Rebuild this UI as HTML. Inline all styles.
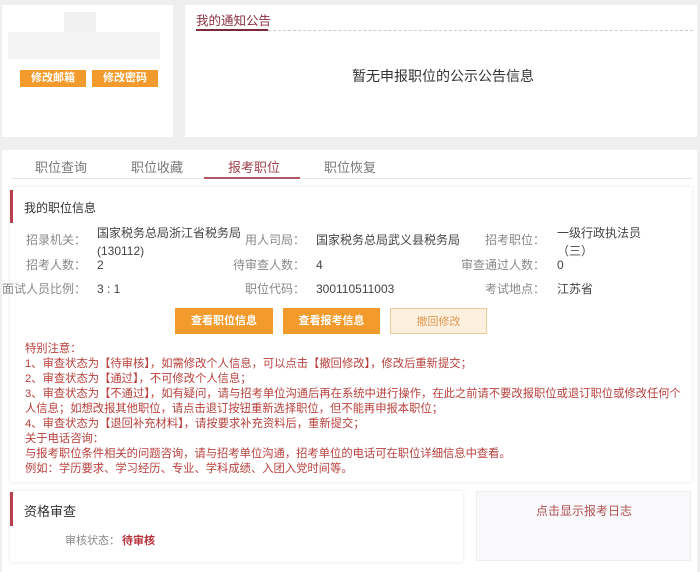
<!DOCTYPE html>
<html><head><meta charset="utf-8"><style>
*{margin:0;padding:0;box-sizing:border-box}
body{width:700px;height:572px;background:#efefef;font-family:"Liberation Sans","Noto Sans CJK SC",sans-serif;position:relative;overflow:hidden;color:#444}
.a{position:absolute}
.btn{position:absolute;background:#f39a2c;color:#fff;font-size:11px;text-align:center;font-weight:bold}
.lab{position:absolute;font-size:12px;color:#888;text-align:right;white-space:nowrap;line-height:16px}
.val{position:absolute;font-size:12px;color:#444;white-space:nowrap;line-height:16px}
.note{position:absolute;left:25px;top:342px;font-size:11.3px;line-height:15px;color:#b8403c;white-space:nowrap}
</style></head><body>
<div class="a" style="left:2px;top:5px;width:171px;height:132px;background:#fff"></div>
<div class="a" style="left:64px;top:12px;width:32px;height:20px;background:#f1f1f1"></div>
<div class="a" style="left:8px;top:32px;width:152px;height:27px;background:#f3f3f3"></div>
<div class="btn" style="left:20px;top:70px;width:66px;height:17px;line-height:17px">修改邮箱</div>
<div class="btn" style="left:92px;top:70px;width:66px;height:17px;line-height:17px">修改密码</div>

<div class="a" style="left:185px;top:5px;width:512px;height:132px;background:#fff"></div>
<div class="a" style="left:196px;top:10px;font-size:12.5px;color:#8a3040">我的通知公告</div>
<div class="a" style="left:196px;top:29px;width:72px;height:2px;background:#7a2a3a"></div>
<div class="a" style="left:268px;top:30px;width:425px;border-top:1px dashed #ccc"></div>
<div class="a" style="left:352px;top:66px;font-size:14px;color:#333">暂无申报职位的公示公告信息</div>

<div class="a" style="left:2px;top:150px;width:695px;height:422px;background:#fff"></div>
<div class="a" style="left:35px;top:157px;font-size:13px;color:#777">职位查询</div>
<div class="a" style="left:131px;top:157px;font-size:13px;color:#777">职位收藏</div>
<div class="a" style="left:228px;top:157px;font-size:13px;color:#a0404a">报考职位</div>
<div class="a" style="left:324px;top:157px;font-size:13px;color:#777">职位恢复</div>
<div class="a" style="left:12px;top:178px;width:680px;height:1px;background:#e4e4e4"></div>
<div class="a" style="left:204px;top:177px;width:96px;height:2px;background:#b05a66"></div>

<div class="a" style="left:10px;top:187px;width:682px;height:295px;background:#fff;box-shadow:0 0 3px #e4e4e4"></div>
<div class="a" style="left:10px;top:190px;width:3px;height:33px;background:#b8404c"></div>
<div class="a" style="left:24px;top:199px;font-size:12px;color:#333">我的职位信息</div>

<div class="lab" style="right:614px;top:232px">招录机关：</div>
<div class="val" style="left:97px;top:224px;line-height:18px">国家税务总局浙江省税务局<br>(130112)</div>
<div class="lab" style="right:395px;top:232px">用人司局：</div>
<div class="val" style="left:316px;top:232px">国家税务总局武义县税务局</div>
<div class="lab" style="right:155px;top:232px">招考职位：</div>
<div class="val" style="left:557px;top:224px;line-height:18px">一级行政执法员<br>（三）</div>

<div class="lab" style="right:614px;top:257px">招考人数：</div>
<div class="val" style="left:97px;top:257px">2</div>
<div class="lab" style="right:395px;top:257px">待审查人数：</div>
<div class="val" style="left:316px;top:257px">4</div>
<div class="lab" style="right:155px;top:257px">审查通过人数：</div>
<div class="val" style="left:557px;top:257px">0</div>

<div class="lab" style="right:614px;top:281px">面试人员比例：</div>
<div class="val" style="left:97px;top:281px">3 : 1</div>
<div class="lab" style="right:395px;top:281px">职位代码：</div>
<div class="val" style="left:316px;top:281px">300110511003</div>
<div class="lab" style="right:155px;top:281px">考试地点：</div>
<div class="val" style="left:557px;top:281px">江苏省</div>

<div class="btn" style="left:175px;top:308px;width:98px;height:26px;line-height:26px">查看职位信息</div>
<div class="btn" style="left:283px;top:308px;width:97px;height:26px;line-height:26px">查看报考信息</div>
<div class="btn" style="left:390px;top:308px;width:97px;height:26px;line-height:26px;background:#fdf0df;color:#e09a55;border:1px solid #f0c99a;font-weight:normal">撤回修改</div>

<div class="note">特别注意：<br>1、审查状态为【待审核】，如需修改个人信息，可以点击【撤回修改】，修改后重新提交；<br>2、审查状态为【通过】，不可修改个人信息；<br>3、审查状态为【不通过】，如有疑问，请与招考单位沟通后再在系统中进行操作，在此之前请不要改报职位或退订职位或修改任何个<br>人信息；如想改报其他职位，请点击退订按钮重新选择职位，但不能再申报本职位；<br>4、审查状态为【退回补充材料】，请按要求补充资料后，重新提交；<br>关于电话咨询：<br>与报考职位条件相关的问题咨询，请与招考单位沟通，招考单位的电话可在职位详细信息中查看。<br>例如：学历要求、学习经历、专业、学科成绩、入团入党时间等。</div>

<div class="a" style="left:10px;top:491px;width:453px;height:71px;background:#fff;box-shadow:0 0 3px #e4e4e4"></div>
<div class="a" style="left:10px;top:492px;width:3px;height:34px;background:#b8404c"></div>
<div class="a" style="left:24px;top:501px;font-size:13px;color:#333">资格审查</div>
<div class="a" style="left:65px;top:532px;font-size:11px;color:#888">审核状态：</div>
<div class="a" style="left:122px;top:532px;font-size:11px;color:#b8303a;font-weight:bold">待审核</div>

<div class="a" style="left:476px;top:491px;width:215px;height:70px;background:#f9f9fb;border:1px solid #eee"></div>
<div class="a" style="left:536px;top:502px;font-size:12px;color:#b05050">点击显示报考日志</div>
</body></html>
